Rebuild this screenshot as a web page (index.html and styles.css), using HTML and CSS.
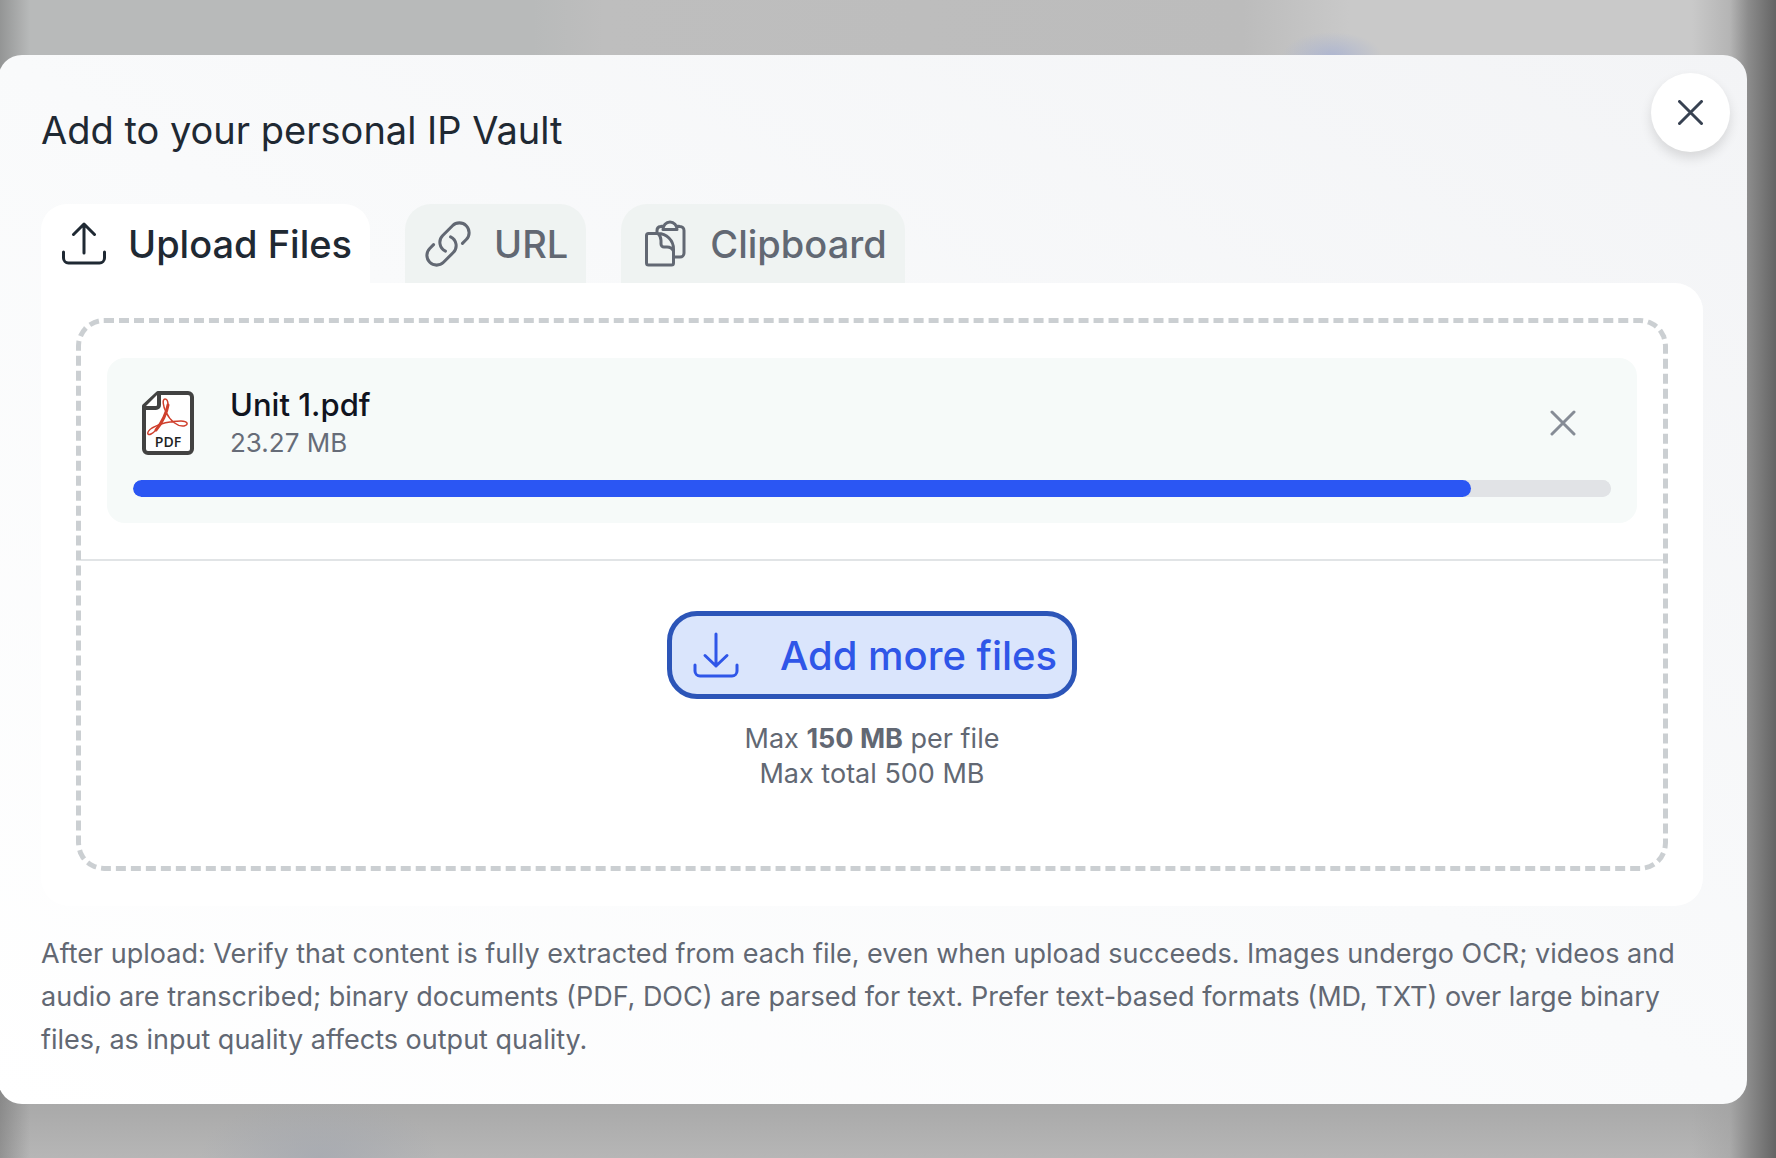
FILE: index.html
```html
<!DOCTYPE html>
<html lang="en">
<head>
    <meta charset="utf-8">
    <title>Add to your personal IP Vault</title>
    <link rel="stylesheet" href="styles.css">
</head>
<body>
    <main class="backdrop">
        <section class="modal" role="dialog" aria-labelledby="modalTitle">
            <button type="button" class="close-btn" aria-label="Close">
                <svg width="26" height="26" viewBox="0 0 26 26"><path d="M1.500 1.500l22 22M23.500 1.500l-22 22"/></svg>
            </button>
            <h1 id="modalTitle">Add to your personal IP Vault</h1>

            <div class="tabs" role="tablist">
                <button type="button" class="tab active" role="tab" aria-selected="true">
                    <svg width="44" height="44" viewBox="0 0 44 44"><path d="M22 31V2M11.500 12.500L22 2l10.500 10.500M1.500 30v6a5 5 0 0 0 5 5h31a5 5 0 0 0 5-5v-6"/></svg>
                    Upload Files
                </button>
                <button type="button" class="tab" role="tab" aria-selected="false">
                    <svg width="52" height="52" viewBox="0 0 24 24" class="thin"><path d="M13.190 8.688a4.500 4.500 0 0 1 1.242 7.244l-4.500 4.500a4.500 4.500 0 0 1-6.364-6.364l1.757-1.757m13.350-.622l1.757-1.757a4.500 4.500 0 0 0-6.364-6.364l-4.500 4.500a4.500 4.500 0 0 0 1.242 7.244"/></svg>
                    URL
                </button>
                <button type="button" class="tab" role="tab" aria-selected="false">
                    <svg width="52" height="52" viewBox="0 0 52 52"><path d="M19 15.500v-3a4 4 0 0 1 3.500-4l3-.5M38.500 8l3.500.5a4 4 0 0 1 4 4V35a4 4 0 0 1-4 4h-6M25 11.500c0-4 3-7.500 7-7.500s7 3.500 7 7.500zM10.500 15.500H20A15.500 15.500 0 0 1 35.500 31v14a2 2 0 0 1-2 2h-23a2 2 0 0 1-2-2V17.500a2 2 0 0 1 2-2M20 15.500c2 2 3 4 3 7v3.500a3 3 0 0 0 3 3h3c3 0 5 1 6.500 4"/></svg>
                    Clipboard
                </button>
            </div>

            <div class="panel" role="tabpanel">
                <div class="dropzone">
                    <div class="file-card">
                        <div class="file-row">
                            <svg class="pdf-icon" width="52" height="64" viewBox="0 0 52 64">
                                <path class="page" d="M16 2h30a4 4 0 0 1 4 4v52a4 4 0 0 1-4 4H6a4 4 0 0 1-4-4V15z"/>
                                <path class="page" d="M17 2v12a3 3 0 0 1-3 3H2"/>
                                <path class="acrobat" d="M23 8c-3 0-2 7 1 13 4 9 12 15 18 14 5-1 4-5-3-5-10 0-22 3-29 7-6 4-5 8-1 6C17 39 25 22 26 14c0-4-1-6-3-6z"/>
                                <path class="acrobat bold" d="M26 14c-1 7-6 18-12 25"/>
                                <text x="26" y="56" text-anchor="middle">PDF</text>
                            </svg>
                            <div class="file-info">
                                <div class="file-name">Unit 1.pdf</div>
                                <div class="file-size">23.27 MB</div>
                            </div>
                            <button type="button" class="remove-btn" aria-label="Remove Unit 1.pdf">
                                <svg width="26" height="26" viewBox="0 0 26 26"><path d="M2 2l22 22M24 2L2 24"/></svg>
                            </button>
                        </div>
                        <progress value="90.5" max="100" aria-label="Upload progress"></progress>
                    </div>
                    <div class="add-more">
                        <button type="button" class="add-btn">
                            <svg width="46" height="46" viewBox="0 0 46 46"><path d="M23 2v32M12 23.500L23 34l11-10.500M2 33v6a5 5 0 0 0 5 5h32a5 5 0 0 0 5-5v-6"/></svg>
                            Add more files
                        </button>
                        <p class="limits">Max <strong>150 MB</strong> per file<br>Max total 500 MB</p>
                    </div>
                </div>
            </div>

            <p class="note">After upload: Verify that content is fully extracted from each file, even when upload succeeds. Images undergo OCR; videos and audio are transcribed; binary documents (PDF, DOC) are parsed for text. Prefer text-based formats (MD, TXT) over large binary files, as input quality affects output quality.</p>
        </section>
    </main>
</body>
</html>
```
FILE: styles.css
```css
* { box-sizing: border-box; }
body { margin: 0; font-family: Inter, "Liberation Sans", sans-serif; color: #1f2933; overflow-x: hidden; }
button { font: inherit; color: inherit; border: none; background: none; padding: 0; cursor: pointer; }
svg { fill: none; stroke: currentColor; stroke-width: 3; stroke-linecap: round; stroke-linejoin: round; flex: none; }

.backdrop {
    min-height: 100vh;
    padding: 55px 29px 54px 0;
    background:
        linear-gradient(to right, rgba(80, 80, 80, 0.35), transparent 30px),
        linear-gradient(to left, #646464, #8c8c8c 28px, rgba(160, 160, 160, 0.5) 46px, transparent 84px),
        radial-gradient(ellipse 50px 24px at 75% 56px, rgba(168, 178, 210, 0.8), transparent),
        radial-gradient(ellipse 120px 60px at 18% 100%, rgba(160, 165, 175, 0.6), transparent),
        linear-gradient(to bottom, transparent 85%, #a8a8a8 95%, #b6b6b6),
        linear-gradient(to right, #b8baba, #b8baba 30%, #bebebe 34%, #bcbcbc 70%, #c9c9c9 76%);
}

.modal {
    position: relative;
    margin-left: -2px;
    padding: 51px 44px 43px 43px;
    border-radius: 24px;
    background: linear-gradient(to top right, #ffffff, #f9fafb, #f3f4f6);
}
h1 { margin: 0 0 50px; font-size: 38px; line-height: 48px; font-weight: 400; }

.close-btn {
    position: absolute;
    top: 18px;
    right: 17px;
    width: 79px;
    height: 79px;
    border-radius: 50%;
    background: #fff;
    color: #374151;
    display: flex;
    align-items: center;
    justify-content: center;
    box-shadow: 0 6px 12px rgba(0, 0, 0, 0.12);
}

.tabs { display: flex; gap: 35px; }
.tab {
    display: flex;
    align-items: center;
    gap: 20px;
    height: 79px;
    padding: 0 18px 0 17px;
    border-radius: 26px 26px 0 0;
    background: #eff3f2;
    color: #626873;
    font-size: 38px;
    font-weight: 500;
}
.tab.active { gap: 22px; padding-left: 21px; background: #fff; color: #1f2933; }
.thin { stroke-width: 1.4; }

.panel { padding: 35px; background: #fff; border-radius: 0 28px 28px 28px; }
.dropzone { border: 5px dashed #cbcfd2; border-radius: 28px; padding-top: 35px; }

.file-card { margin: 0 26px 36px; padding: 26px; border-radius: 18px; background: #f6faf9; }
.file-row { display: flex; align-items: center; padding: 0 35px 0 9px; margin-bottom: 18px; }
.file-info { flex: 1; margin-left: 36px; padding-top: 2px; }
.file-name { font-size: 31px; line-height: 38px; font-weight: 500; color: #10141f; }
.file-size { font-size: 26px; line-height: 38px; color: #666c78; }
.remove-btn { display: flex; color: #868c96; }

.pdf-icon .page { fill: #fff; stroke: #424242; stroke-width: 4; }
.pdf-icon .acrobat { stroke: #cf3f2c; stroke-width: 1.5; }
.pdf-icon .bold { stroke-width: 3; }
.pdf-icon text { font: 600 14px "Open Sans", sans-serif; fill: #222; stroke: none; }

progress { display: block; width: 100%; height: 17px; border: none; border-radius: 9px; appearance: none; background: #e1e3e6; overflow: hidden; }
progress::-webkit-progress-bar { background: #e1e3e6; border-radius: 9px; }
progress::-webkit-progress-value { background: #2b56f3; border-radius: 9px; }

.add-more { border-top: 2px solid #e1e4e6; padding: 50px 0 75px; display: flex; flex-direction: column; align-items: center; }
.add-btn {
    display: flex;
    align-items: center;
    gap: 41px;
    height: 88px;
    padding: 0 15px 0 21px;
    border: 5px solid #2c55b8;
    border-radius: 30px;
    background: #dae5fc;
    color: #2f56e8;
    font-size: 40px;
    font-weight: 500;
}
.limits { margin: 22px 0 0; text-align: center; font-size: 27px; line-height: 35px; color: #626873; }
.note { margin: 26px 0 0; font-size: 27px; line-height: 43px; color: #626873; }
```
